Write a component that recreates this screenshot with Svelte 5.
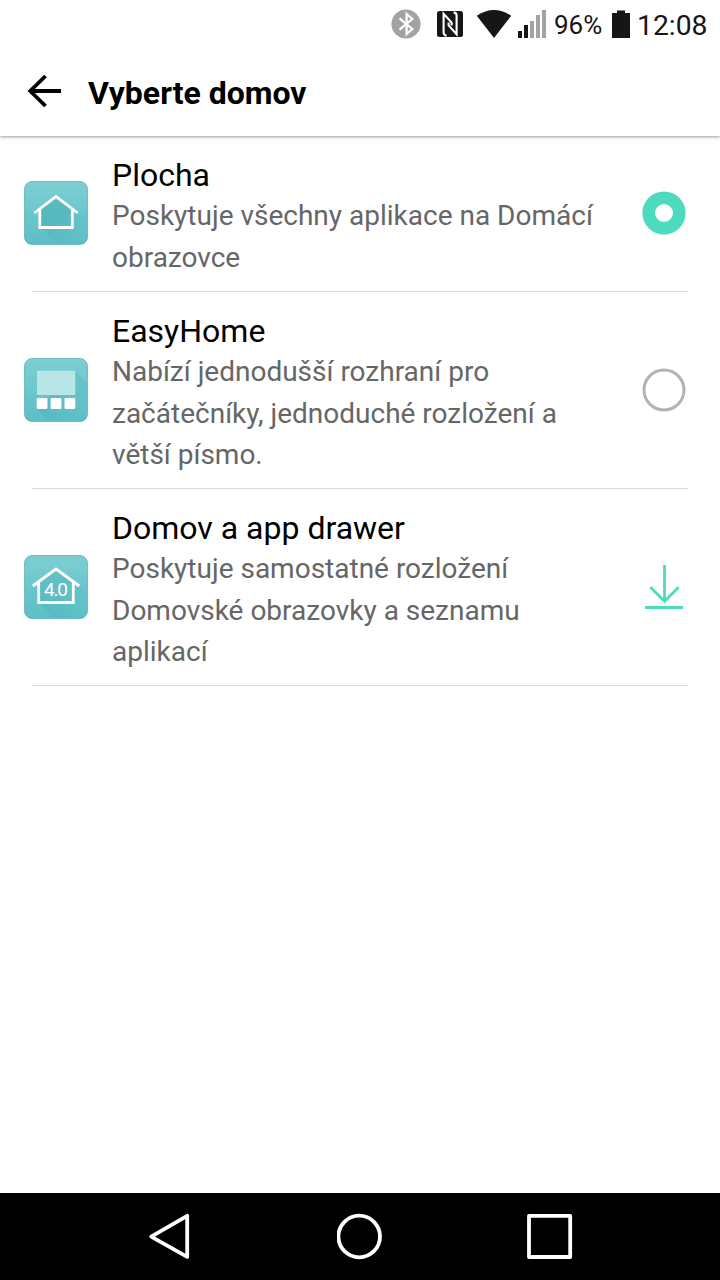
<script>
	let selected = 'plocha';

	const homes = [
		{
			id: 'plocha',
			name: 'Plocha',
			description: ['Poskytuje všechny aplikace na Domácí', 'obrazovce'],
			installed: true
		},
		{
			id: 'easy',
			name: 'EasyHome',
			description: ['Nabízí jednodušší rozhraní pro', 'začátečníky, jednoduché rozložení a', 'větší písmo.'],
			installed: true
		},
		{
			id: 'drawer',
			name: 'Domov a app drawer',
			description: ['Poskytuje samostatné rozložení', 'Domovské obrazovky a seznamu', 'aplikací'],
			installed: false
		}
	];

	function choose(home) {
		if (home.installed) selected = home.id;
	}
</script>

<div class="screen">
	<div class="status-bar">
		<svg class="bluetooth" width="30" height="30" viewBox="0 0 30 30">
			<circle cx="15" cy="15" r="14.6" fill="#a3a3a3" />
			<path d="M8.5 9.3 L21.3 20 L15.6 25 V5 L21.3 10 L8.5 20.7" fill="none" stroke="#fff" stroke-width="2.2" />
		</svg>
		<svg class="nfc" width="26" height="26" viewBox="0 0 26 26">
			<rect width="26" height="26" rx="2.5" fill="#161616" />
			<path d="M9.6 24.6 Q6.6 24.2 6.6 21.5 V2.8 L14.6 11.6 V14.5 M16.6 1.4 Q19.6 1.8 19.6 4.5 V23.2 L11.6 14.4 V11.5" fill="none" stroke="#fff" stroke-width="2.1" />
		</svg>
		<svg class="wifi" width="36" height="28" viewBox="0 0 36 28">
			<path d="M0.8 5.7 Q18 -5.7 35.2 5.7 L18 28 Z" fill="#161616" />
		</svg>
		<svg class="signal" width="28" height="28" viewBox="0 0 28 28">
			<path d="M0 21h4v7h-4z M6 15h4v13h-4z" fill="#161616" />
			<path d="M12 11h4v17h-4z M18 5h4v23h-4z M24 0h4v28h-4z" fill="#a3a3a3" />
		</svg>
		<span class="percent">96%</span>
		<svg class="battery" width="18" height="28" viewBox="0 0 18 28">
			<path d="M5 0h8v1h-8z" fill="#888" />
			<path d="M5 1h8v2h5v25h-18v-25h5z" fill="#161616" />
		</svg>
		<span class="clock">12:08</span>
	</div>

	<header>
		<svg class="back" width="36" height="34" viewBox="0 0 36 34">
			<path d="M18.5 2 L3.3 17 L18.5 32 M3 17 H34" fill="none" stroke="#000" stroke-width="3.8" />
		</svg>
		<h1>Vyberte domov</h1>
	</header>

	<main>
		{#each homes as home}
			<!-- svelte-ignore a11y_click_events_have_key_events a11y_no_static_element_interactions -->
			<div class="row" on:click={() => choose(home)}>
				<svg class="app-icon" width="64" height="64" viewBox="0 0 64 64">
					<defs>
						<linearGradient id="tile-{home.id}" x1="0" y1="0" x2="0" y2="1">
							<stop offset="0" stop-color="#7ccfd3" />
							<stop offset="1" stop-color="#5bbec7" />
						</linearGradient>
						<linearGradient id="shade-{home.id}" x1="0" y1="0" x2="1" y2="1">
							<stop offset="0.35" stop-color="#399fa9" stop-opacity="0.25" />
							<stop offset="0.85" stop-color="#399fa9" stop-opacity="0" />
						</linearGradient>
					</defs>
					<rect x="0.5" y="0.5" width="63" height="63" rx="7.5" fill="url(#tile-{home.id})" stroke="#55abb2" stroke-opacity="0.7" />
					{#if home.id === 'plocha'}
						<path d="M54 31 L63 40 V56 Q63 63 56 63 H33 L16 46 V28 L32 15 Z" fill="url(#shade-{home.id})" />
						<path d="M16 28 L32 15 L48 28 V46 H16 Z" fill="#45acb5" fill-opacity="0.25" />
						<path d="M15.8 28 V46.5 H48.3 V28 M10.3 32 L32 15.6 L53.7 32" fill="none" stroke="#fff" stroke-width="2.8" />
					{:else if home.id === 'easy'}
						<path d="M51 13 L63 25 V56 Q63 63 56 63 H25 L13 51 Z" fill="url(#shade-{home.id})" />
						<rect x="13" y="12.7" width="38.3" height="24.3" fill="#b9e5e7" />
						<rect x="12.7" y="40" width="10.8" height="11" rx="1.3" fill="#fff" />
						<rect x="26.6" y="40" width="10.8" height="11" rx="1.3" fill="#fff" />
						<rect x="40.5" y="40" width="10.8" height="11" rx="1.3" fill="#fff" />
					{:else}
						<path d="M55 31 L63 39 V56 Q63 63 56 63 H30 L15 48 V27 L32 14 Z" fill="url(#shade-{home.id})" />
						<path d="M14.7 27.5 V47.5 H49.3 V27.5 M8.8 31 L32 14 L55.2 31" fill="none" stroke="#fff" stroke-width="2.8" />
						<text x="32" y="41" text-anchor="middle" textLength="24" lengthAdjust="spacing">4.0</text>
					{/if}
				</svg>

				<div class="text">
					<div class="name">{home.name}</div>
					<div class="description">
						{#each home.description as line}
							<div>{line}</div>
						{/each}
					</div>
				</div>

				<svg class="action" width="44" height="44" viewBox="0 0 44 44">
					{#if !home.installed}
						<path d="M22.5 0 V36.5 M8.4 22.3 L22.5 36.3 L36.6 22.3 M3 42.5 H41" fill="none" stroke="#4ddbc0" stroke-width="2.8" />
					{:else if selected === home.id}
						<circle cx="22" cy="22" r="15.3" fill="none" stroke="#4ddbc0" stroke-width="12.6" />
					{:else}
						<circle cx="22" cy="22" r="20" fill="none" stroke="#b2b2b2" stroke-width="3" />
					{/if}
				</svg>
			</div>
		{/each}
	</main>

	<nav>
		<svg width="48" height="48" viewBox="0 0 48 48">
			<path d="M4.2 23.7 L40.2 2.8 V43.9 Z" />
		</svg>
		<svg width="48" height="48" viewBox="0 0 48 48">
			<circle cx="22.2" cy="23.5" r="20.8" />
		</svg>
		<svg width="48" height="48" viewBox="0 0 48 48">
			<rect x="3" y="2.8" width="41.2" height="41.2" />
		</svg>
	</nav>
</div>

<style>
	:global(body) {
		margin: 0;
		background: #fff;
	}

	.screen {
		display: flex;
		flex-direction: column;
		width: 720px;
		height: 1280px;
		overflow: hidden;
		background: #fff;
		font-family: Roboto, sans-serif;
		color: #000;
	}

	svg {
		display: block;
		flex: none;
	}

	.status-bar {
		display: flex;
		align-items: center;
		justify-content: flex-end;
		box-sizing: border-box;
		height: 48px;
		padding-right: 12px;
		color: #161616;
	}

	.nfc {
		margin-left: 16px;
	}

	.wifi {
		margin-left: 13px;
	}

	.signal {
		margin-left: 6px;
	}

	.percent {
		width: 49px;
		margin: 2px 0 0 8px;
		font-size: 26px;
		line-height: 30px;
		white-space: nowrap;
	}

	.battery {
		margin-left: 9px;
	}

	.clock {
		width: 71px;
		margin: 4px 0 0 7px;
		font-size: 28.3px;
		line-height: 32px;
		white-space: nowrap;
	}

	header {
		display: flex;
		align-items: center;
		box-sizing: border-box;
		height: 88px;
		padding: 0 0 2px 27px;
		box-shadow: 0 1px 3px rgba(0, 0, 0, 0.4);
		clip-path: inset(0 0 -6px 0);
	}

	h1 {
		margin: 4px 0 0 25px;
		font-size: 32px;
		line-height: 38px;
		font-weight: 700;
	}

	main {
		flex: 1;
		padding: 0 32px;
	}

	.row {
		display: flex;
		align-items: center;
		box-sizing: border-box;
		height: 197px;
		border-bottom: 1px solid #d9d9d9;
	}

	.row:first-child {
		height: 156px;
		padding-bottom: 1px;
	}

	.app-icon {
		margin-left: -8px;
	}

	.app-icon text {
		font-size: 19px;
		font-weight: 400;
		fill: #fff;
	}

	.text {
		flex: 1;
		align-self: flex-start;
		margin-left: 24px;
		padding-top: 20px;
		white-space: nowrap;
	}

	.name {
		font-size: 32px;
		line-height: 38px;
	}

	.description {
		padding-top: 1px;
		font-size: 28px;
		line-height: 41px;
		color: #666;
	}

	.description div:first-child {
		padding-bottom: 1px;
	}

	.action {
		margin-right: 2px;
	}

	nav {
		display: flex;
		align-items: center;
		box-sizing: border-box;
		height: 87px;
		padding: 0 146px 0 147px;
		justify-content: space-between;
		background: #000;
	}

	nav svg {
		fill: none;
		stroke: #fff;
		stroke-width: 3.8;
		stroke-linejoin: round;
	}
</style>
